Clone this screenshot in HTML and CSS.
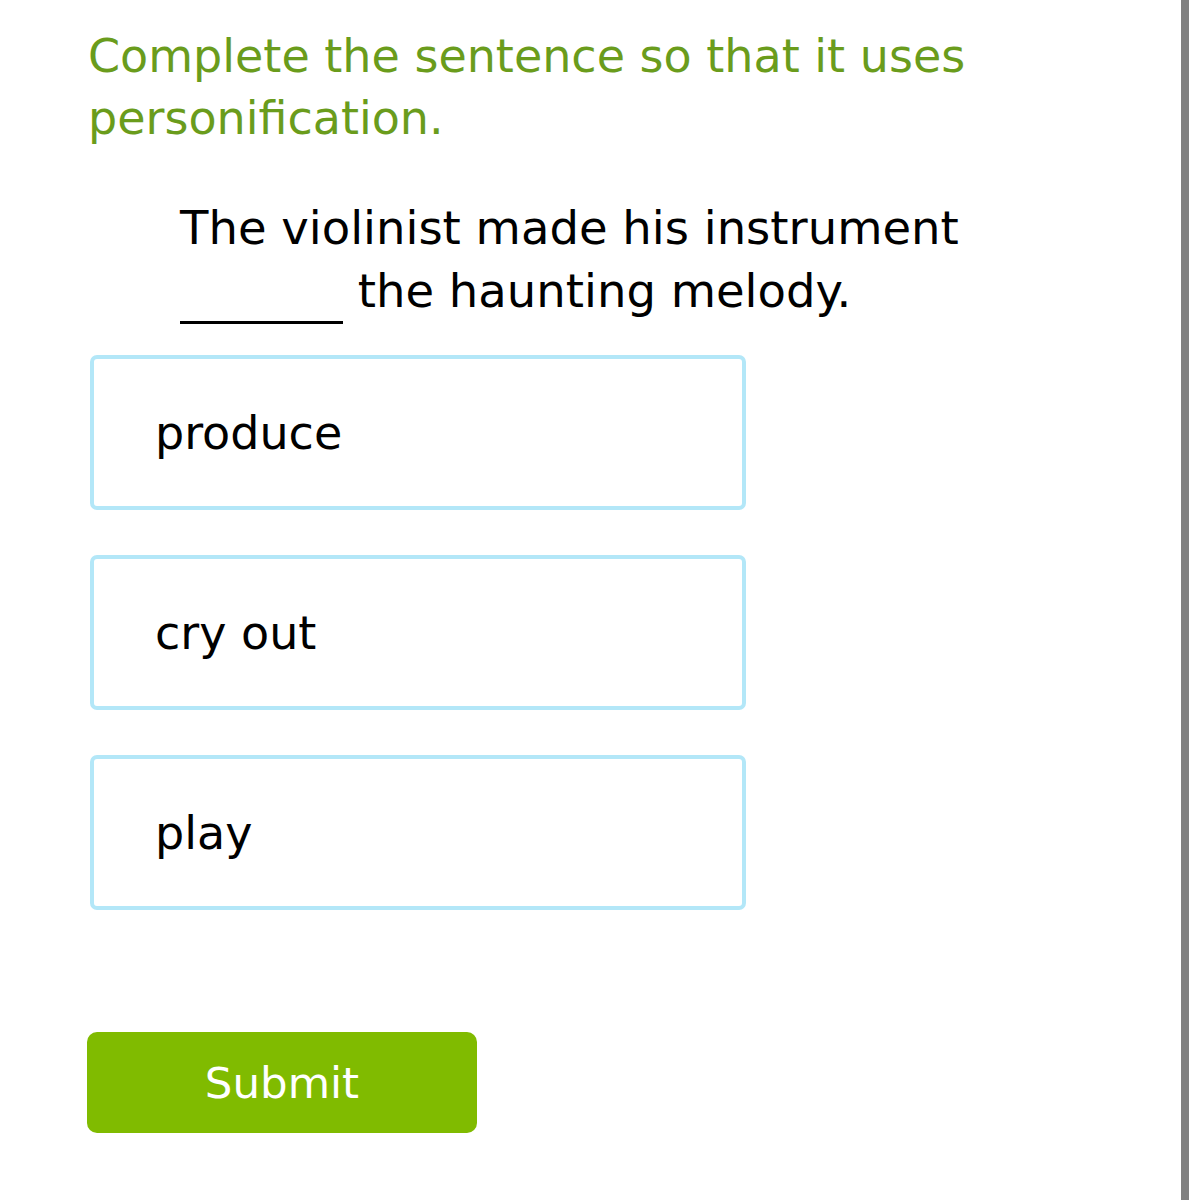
FILE: index.html
```html
<!DOCTYPE html>
<html>
<head>
<meta charset="utf-8">
<link rel="stylesheet" href="styles.css">
</head>
<body>
<div class="page">
  <main class="content">
    <h1 class="prompt">Complete the sentence so that it uses personification.</h1>
    <p class="sentence">The violinist made his instrument <span class="blank"></span> the haunting melody.</p>
    <div class="choices">
      <div class="choice">produce</div>
      <div class="choice">cry out</div>
      <div class="choice">play</div>
    </div>
    <button class="submit">Submit</button>
  </main>
  <div class="scrollbar"></div>
</div>
</body>
</html>
```

FILE: styles.css
```css
html, body {
  margin: 0;
  padding: 0;
  background: #fff;
}
body {
  font-family: "DejaVu Sans", Verdana, sans-serif;
}
.page {
  display: flex;
  width: 1199px;
  min-height: 1200px;
}
.content {
  width: 1181px;
  padding: 25px 0 0 88px;
  box-sizing: border-box;
}
.scrollbar {
  width: 8px;
  background: #808080;
}
.prompt {
  margin: 0;
  font-weight: normal;
  font-size: 46px;
  line-height: 62px;
  color: #6a9c1c;
  width: 900px;
}
.sentence {
  margin: 48px 0 0 92px;
  font-size: 46.5px;
  line-height: 63px;
  color: #000;
  width: 800px;
}
.blank {
  display: inline-block;
  width: 163px;
  height: 0;
  border-bottom: 3px solid #000;
  margin-bottom: -17px;
}
.choices {
  margin: 32px 0 0 2px;
  display: flex;
  flex-direction: column;
  gap: 45px;
}
.choice {
  box-sizing: border-box;
  width: 656px;
  height: 155px;
  border: 4px solid #b3e7f8;
  border-radius: 7px;
  padding-left: 61px;
  display: flex;
  align-items: center;
  font-size: 46px;
  color: #000;
}
.submit {
  display: block;
  margin: 122px 0 0 -1px;
  width: 390px;
  height: 101px;
  border: none;
  border-radius: 10px;
  background: #80bb00;
  color: #fff;
  font-family: "DejaVu Sans", Verdana, sans-serif;
  font-size: 43.5px;
  padding: 0;
}
```
